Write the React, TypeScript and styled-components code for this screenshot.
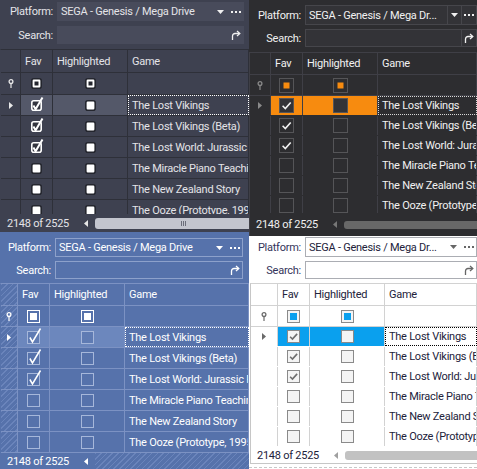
import React from 'react';
import styled, { createGlobalStyle, css, ThemeProvider, useTheme } from 'styled-components';

type BoxSkin = {
    size: number;
    fill: string;
    selFill: string;
    stroke: string;
    onFill: string;
    onStroke: string;
    mixStroke: string;
    strokeW: number;
    radius: number;
    inner: number;
    innerColor: string;
    mark: string;
    markW: number;
    tall: boolean;
};

type Skin = {
    w: number;
    h: number;
    bg: string;
    text: string;
    label: string;
    pad: string;
    labelW: number;
    comboH: number;
    searchH: number;
    gap: number;
    platform: string;
    inputBg: string;
    inputBorder: string;
    split: boolean;
    glyph: string;
    gridInset: number;
    gridEdge: string;
    line: string;
    rowLines: boolean;
    cols: number[];
    headH: number;
    filterH: number;
    rowH: number;
    footH: number;
    indBg: string;
    selBg: string;
    focusBg: string;
    focus: string;
    marker: string;
    box: BoxSkin;
    thumb: string;
    thumbH: number;
    grip?: string;
    arrow: string;
    tail?: boolean;
};

const GlobalStyle = createGlobalStyle`
    *, *::before, *::after {
        box-sizing: border-box;
    }
    body {
        margin: 0;
        background: #ffffff;
    }
`;

const games = [
    { fav: true, hl: false, name: 'The Lost Vikings' },
    { fav: true, hl: false, name: 'The Lost Vikings (Beta)' },
    { fav: true, hl: false, name: 'The Lost World: Jurassic Park' },
    { fav: false, hl: false, name: 'The Miracle Piano Teaching System' },
    { fav: false, hl: false, name: 'The New Zealand Story' },
    { fav: false, hl: false, name: 'The Ooze (Prototype, 1995-06-19)' },
];

const hatch = (a: string, b: string) =>
    `repeating-linear-gradient(135deg, ${a} 0 1px, ${b} 1px 4px)`;

const slate: Skin = {
    w: 249,
    h: 232,
    bg: '#3e4150',
    text: '#e4e4e8',
    label: '#e4e4e8',
    pad: '2px 5px 5px 0',
    labelW: 57,
    comboH: 19,
    searchH: 18,
    gap: 5,
    platform: 'SEGA - Genesis / Mega Drive',
    inputBg: '#484b5b',
    inputBorder: '#484b5b',
    split: false,
    glyph: '#f0f0f0',
    gridInset: 0,
    gridEdge: 'transparent',
    line: '#2e3039',
    rowLines: true,
    cols: [20, 32, 75],
    headH: 23,
    filterH: 22,
    rowH: 21,
    footH: 18,
    indBg: '#3e4150',
    selBg: '#545869',
    focusBg: '#3e4150',
    focus: '#ffffff',
    marker: '#e8e8e8',
    box: {
        size: 11,
        fill: '#ffffff',
        selFill: '',
        stroke: '#24262e',
        onFill: '#33353f',
        onStroke: '#ffffff',
        mixStroke: '#24262e',
        strokeW: 1.6,
        radius: 2,
        inner: 4,
        innerColor: '#24262e',
        mark: '#ffffff',
        markW: 2,
        tall: true,
    },
    thumb: '#c3c5ce',
    thumbH: 11,
    grip: '#6b6e7a',
    arrow: '#e8e8e8',
};

const charcoal: Skin = {
    w: 228,
    h: 236,
    bg: '#2d2d30',
    text: '#f1f1f1',
    label: '#f1f1f1',
    pad: '5px 0 5px 0',
    labelW: 56,
    comboH: 20,
    searchH: 18,
    gap: 4,
    platform: 'SEGA - Genesis / Mega Dr...',
    inputBg: '#333337',
    inputBorder: '#46464b',
    split: true,
    glyph: '#f1f1f1',
    gridInset: 0,
    gridEdge: '#3f3f46',
    line: '#3f3f46',
    rowLines: false,
    cols: [21, 32, 75],
    headH: 22,
    filterH: 21,
    rowH: 20,
    footH: 23,
    indBg: '#2d2d30',
    selBg: '#f78b0f',
    focusBg: '#2d2d30',
    focus: '#d8d8d8',
    marker: '#8a8a8a',
    box: {
        size: 15,
        fill: 'transparent',
        selFill: '#333337',
        stroke: '#555558',
        onFill: 'transparent',
        onStroke: '#555558',
        mixStroke: '#555558',
        strokeW: 1,
        radius: 0,
        inner: 6,
        innerColor: '#f78b0f',
        mark: '#f1f1f1',
        markW: 1.6,
        tall: false,
    },
    thumb: '#686868',
    thumbH: 8,
    arrow: '#777777',
};

const azure: Skin = {
    w: 249,
    h: 237,
    bg: '#5672ab',
    text: '#ffffff',
    label: '#ffffff',
    pad: '6px 6px 4px 0',
    labelW: 55,
    comboH: 19,
    searchH: 18,
    gap: 4,
    platform: 'SEGA - Genesis / Mega Drive',
    inputBg: '#5672ab',
    inputBorder: '#8da1cb',
    split: false,
    glyph: '#ffffff',
    gridInset: 0,
    gridEdge: 'transparent',
    line: '#7c92c3',
    rowLines: true,
    cols: [17, 32, 75],
    headH: 22,
    filterH: 21,
    rowH: 21,
    footH: 16,
    indBg: hatch('#6a84bb', '#5672ab'),
    selBg: '#6c87bd',
    focusBg: '#5672ab',
    focus: '#ffffff',
    marker: '#ffffff',
    box: {
        size: 13,
        fill: 'transparent',
        selFill: '#5f7bb3',
        stroke: '#a6b7da',
        onFill: 'transparent',
        onStroke: '#a6b7da',
        mixStroke: '#ffffff',
        strokeW: 1,
        radius: 0,
        inner: 7,
        innerColor: '#ffffff',
        mark: '#ffffff',
        markW: 1.5,
        tall: true,
    },
    thumb: hatch('#6a84bb', '#5672ab'),
    thumbH: 16,
    arrow: '#ffffff',
};

const paper: Skin = {
    w: 228,
    h: 233,
    bg: '#ffffff',
    text: '#22223a',
    label: '#34345a',
    pad: '1px 0 4px 0',
    labelW: 56,
    comboH: 20,
    searchH: 18,
    gap: 4,
    platform: 'SEGA - Genesis / Mega Dr...',
    inputBg: '#ffffff',
    inputBorder: '#abadb3',
    split: false,
    glyph: '#666666',
    gridInset: 1,
    gridEdge: '#c6c6c6',
    line: '#d2d2d2',
    rowLines: false,
    cols: [27, 32, 75],
    headH: 22,
    filterH: 21,
    rowH: 20,
    footH: 17,
    indBg: '#ffffff',
    selBg: '#0aa0ee',
    focusBg: '#ffffff',
    focus: '#000000',
    marker: '#6a6a6a',
    box: {
        size: 13,
        fill: '#f4f4f4',
        selFill: '#f4f4f4',
        stroke: '#8a8a8a',
        onFill: '#f4f4f4',
        onStroke: '#8a8a8a',
        mixStroke: '#8a8a8a',
        strokeW: 1,
        radius: 0,
        inner: 7,
        innerColor: '#0aa0ee',
        mark: '#6e6e6e',
        markW: 1.6,
        tall: false,
    },
    thumb: '#c2c2c2',
    thumbH: 9,
    arrow: '#a0a0a0',
    tail: true,
};

type BoxState = 'on' | 'off' | 'mixed';

const CheckBox = ({ state, sel }: { state: BoxState; sel?: boolean }) => {
    const { box: b } = useTheme() as Skin;
    const s = b.size;
    const pad = 3;
    const W = s + pad * 2;
    const o = b.strokeW / 2;
    const fill = sel && b.selFill ? b.selFill : state === 'on' ? b.onFill : b.fill;
    const stroke = state === 'mixed' ? b.mixStroke : state === 'on' ? b.onStroke : b.stroke;
    const mark = b.tall
        ? `M${pad + s * 0.22} ${pad + s * 0.5} L${pad + s * 0.42} ${pad + s * 0.84} L${pad + s + 0.5} ${pad - 2.5}`
        : `M${pad + s * 0.24} ${pad + s * 0.52} L${pad + s * 0.42} ${pad + s * 0.7} L${pad + s * 0.78} ${pad + s * 0.3}`;
    return (
        <svg width={W} height={W} viewBox={`0 0 ${W} ${W}`}>
            <rect
                x={pad + o}
                y={pad + o}
                width={s - 2 * o}
                height={s - 2 * o}
                rx={b.radius}
                fill={fill}
                stroke={stroke}
                strokeWidth={b.strokeW}
            />
            {state === 'mixed' && (
                <rect
                    x={pad + (s - b.inner) / 2}
                    y={pad + (s - b.inner) / 2}
                    width={b.inner}
                    height={b.inner}
                    fill={b.innerColor}
                />
            )}
            {state === 'on' && (
                <path d={mark} fill="none" stroke={b.mark} strokeWidth={b.markW} />
            )}
        </svg>
    );
};

const Caret = ({ color }: { color: string }) => (
    <svg width="7" height="4" viewBox="0 0 7 4">
        <path d="M0 0H7L3.5 4Z" fill={color} />
    </svg>
);

const Dots = ({ color }: { color: string }) => (
    <svg width="10" height="2" viewBox="0 0 10 2">
        <rect x="0" y="0" width="2" height="2" fill={color} />
        <rect x="4" y="0" width="2" height="2" fill={color} />
        <rect x="8" y="0" width="2" height="2" fill={color} />
    </svg>
);

const Jump = ({ color }: { color: string }) => (
    <svg width="10" height="10" viewBox="0 0 10 10">
        <path d="M1.5 10V6A2.5 2.5 0 0 1 4 3.5H8" fill="none" stroke={color} strokeWidth="1.3" />
        <path d="M6 1L8.8 3.5L6 6" fill="none" stroke={color} strokeWidth="1.3" />
    </svg>
);

const Pin = ({ color }: { color: string }) => (
    <svg width="6" height="9" viewBox="0 0 6 9">
        <circle cx="3" cy="2.6" r="1.9" fill="none" stroke={color} strokeWidth="1.3" />
        <rect x="2.4" y="4.2" width="1.2" height="4.8" fill={color} />
    </svg>
);

const RowMark = ({ color }: { color: string }) => (
    <svg width="4" height="7" viewBox="0 0 4 7">
        <path d="M0 0L4 3.5L0 7Z" fill={color} />
    </svg>
);

const LeftMark = ({ color }: { color: string }) => (
    <svg width="4" height="7" viewBox="0 0 4 7">
        <path d="M4 0L0 3.5L4 7Z" fill={color} />
    </svg>
);

const Board = styled.main`
    display: flex;
    width: 477px;
    height: 469px;
    overflow: hidden;
`;

const Column = styled.div<{ $w: number }>`
    display: flex;
    flex-direction: column;
    flex: none;
    width: ${({ $w }) => $w}px;
`;

const Panel = styled.section`
    display: flex;
    flex-direction: column;
    flex: none;
    width: ${({ theme }) => theme.w}px;
    height: ${({ theme }) => theme.h}px;
    background: ${({ theme }) => theme.bg};
    color: ${({ theme }) => theme.text};
    font: 11px Roboto, 'Liberation Sans', sans-serif;
    letter-spacing: -0.25px;
    overflow: hidden;
`;

const Form = styled.div`
    display: grid;
    flex: none;
    grid-template-columns: ${({ theme }) => theme.labelW}px minmax(0, 1fr);
    grid-template-rows: ${({ theme }) => `${theme.comboH}px ${theme.searchH}px`};
    row-gap: ${({ theme }) => theme.gap}px;
    padding: ${({ theme }) => theme.pad};
`;

const Label = styled.label`
    align-self: center;
    padding-right: 4px;
    text-align: right;
    color: ${({ theme }) => theme.label};
`;

const Field = styled.div`
    display: flex;
    align-items: stretch;
    min-width: 0;
    background: ${({ theme }) => theme.inputBg};
    border: 1px solid ${({ theme }) => theme.inputBorder};
`;

const FieldText = styled.span`
    flex: 1;
    align-self: center;
    padding-left: 3px;
    overflow: hidden;
    white-space: nowrap;
`;

const FieldButton = styled.span<{ $w: number }>`
    display: flex;
    align-items: center;
    justify-content: center;
    flex: none;
    width: ${({ $w }) => $w}px;
    ${({ theme }) =>
        theme.split &&
        css`
            border-left: 1px solid ${theme.inputBorder};
        `}
`;

const Grid = styled.div`
    display: flex;
    flex-direction: column;
    flex: 1;
    min-height: 0;
    margin-left: ${({ theme }) => theme.gridInset}px;
    border-top: 1px solid ${({ theme }) => theme.line};
    border-left: 1px solid ${({ theme }) => theme.gridEdge};
`;

const Body = styled.div`
    flex: 1;
    min-height: 0;
    overflow: hidden;
`;

const Row = styled.div<{ $h: number; $lined: boolean }>`
    display: grid;
    grid-template-columns: ${({ theme }) => theme.cols.map((c: number) => `${c}px`).join(' ')} minmax(0, 1fr);
    height: ${({ $h }) => $h}px;
    border-bottom: 1px solid ${({ theme, $lined }) => ($lined ? theme.line : 'transparent')};
`;

const Cell = styled.div<{ $center?: boolean; $ind?: boolean; $sel?: boolean; $focus?: boolean }>`
    display: flex;
    align-items: center;
    justify-content: ${({ $center, $ind }) => ($center || $ind ? 'center' : 'flex-start')};
    padding: ${({ $center, $ind }) => ($center || $ind ? '0' : '0 4px')};
    min-width: 0;
    overflow: hidden;
    white-space: nowrap;
    border-right: 1px solid ${({ theme }) => theme.line};
    background: ${({ theme, $ind, $sel }) => ($sel ? theme.selBg : $ind ? theme.indBg : 'transparent')};
    ${({ $focus, theme }) =>
        $focus &&
        css`
            background: ${theme.focusBg};
            border: 1px dotted ${theme.focus};
            padding-left: 3px;
        `}
`;

const Footer = styled.div`
    display: flex;
    align-items: center;
    flex: none;
    height: ${({ theme }) => theme.footH}px;
    margin-left: ${({ theme }) => theme.gridInset}px;
    border-left: 1px solid ${({ theme }) => theme.gridEdge};
    ${({ theme }) =>
        theme.tail &&
        css`
            border-bottom: 1px solid ${theme.gridEdge};
        `}
`;

const Count = styled.span`
    flex: none;
    width: 78px;
    padding-left: 6px;
`;

const ArrowBox = styled.span`
    display: flex;
    align-items: center;
    justify-content: center;
    flex: none;
    width: 14px;
`;

const Thumb = styled.div`
    display: flex;
    align-items: center;
    flex: 1;
    height: ${({ theme }) => theme.thumbH}px;
    margin-left: 2px;
    padding-left: 86px;
    background: ${({ theme }) => theme.thumb};
    border-radius: ${({ theme }) => (theme.thumbH > 12 ? '0' : '3px 0 0 3px')};
`;

const Grip = styled.span`
    width: 5px;
    height: 5px;
    border-left: 1px solid ${({ theme }) => theme.grip};
    border-right: 1px solid ${({ theme }) => theme.grip};
    background: linear-gradient(${({ theme }) => theme.grip}, ${({ theme }) => theme.grip}) center / 1px 100% no-repeat;
`;

const Tail = styled.div`
    flex: none;
    height: 5px;
    padding-top: 3px;

    &::after {
        content: '';
        display: block;
        border-top: 1px dashed #c8c8c8;
    }
`;

const GamePanel = () => {
    const t = useTheme() as Skin;
    return (
        <Panel>
            <Form>
                <Label>Platform:</Label>
                <Field>
                    <FieldText>{t.platform}</FieldText>
                    <FieldButton $w={t.split ? 14 : 15}>
                        <Caret color={t.glyph} />
                    </FieldButton>
                    <FieldButton $w={15}>
                        <Dots color={t.glyph} />
                    </FieldButton>
                </Field>
                <Label>Search:</Label>
                <Field>
                    <FieldText />
                    <FieldButton $w={15}>
                        <Jump color={t.glyph} />
                    </FieldButton>
                </Field>
            </Form>
            <Grid>
                <Row $h={t.headH} $lined>
                    <Cell $ind />
                    <Cell>Fav</Cell>
                    <Cell>Highlighted</Cell>
                    <Cell>Game</Cell>
                </Row>
                <Row $h={t.filterH} $lined>
                    <Cell $ind>
                        <Pin color={t.marker} />
                    </Cell>
                    <Cell $center>
                        <CheckBox state="mixed" />
                    </Cell>
                    <Cell $center>
                        <CheckBox state="mixed" />
                    </Cell>
                    <Cell />
                </Row>
                <Body>
                    {games.map((g, i) => {
                        const sel = i === 0;
                        return (
                            <Row key={g.name} $h={t.rowH} $lined={t.rowLines}>
                                <Cell $ind>{sel && <RowMark color={t.marker} />}</Cell>
                                <Cell $center $sel={sel}>
                                    <CheckBox state={g.fav ? 'on' : 'off'} sel={sel} />
                                </Cell>
                                <Cell $center $sel={sel}>
                                    <CheckBox state={g.hl ? 'on' : 'off'} sel={sel} />
                                </Cell>
                                <Cell $focus={sel}>{g.name}</Cell>
                            </Row>
                        );
                    })}
                </Body>
            </Grid>
            <Footer>
                <Count>2148 of 2525</Count>
                <ArrowBox>
                    <LeftMark color={t.arrow} />
                </ArrowBox>
                <Thumb>{t.grip && <Grip />}</Thumb>
            </Footer>
            {t.tail && <Tail />}
        </Panel>
    );
};

export default function App() {
    return (
        <>
            <GlobalStyle />
            <Board>
                <Column $w={249}>
                    <ThemeProvider theme={slate}>
                        <GamePanel />
                    </ThemeProvider>
                    <ThemeProvider theme={azure}>
                        <GamePanel />
                    </ThemeProvider>
                </Column>
                <Column $w={228}>
                    <ThemeProvider theme={charcoal}>
                        <GamePanel />
                    </ThemeProvider>
                    <ThemeProvider theme={paper}>
                        <GamePanel />
                    </ThemeProvider>
                </Column>
            </Board>
        </>
    );
}
